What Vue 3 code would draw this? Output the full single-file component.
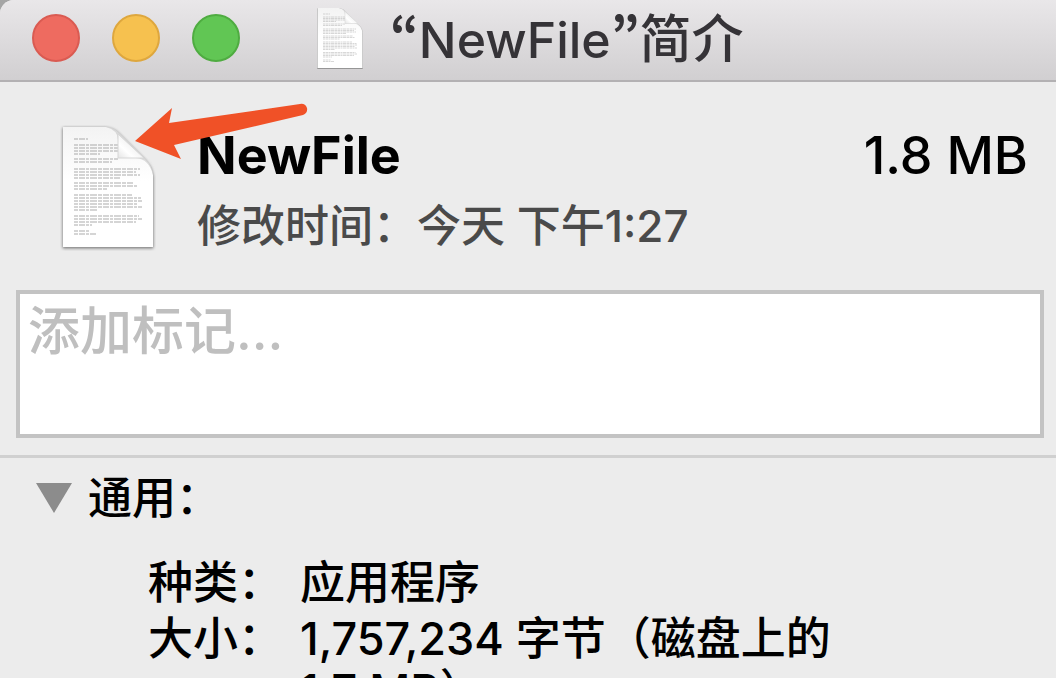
<script setup>
import { ref } from 'vue'

const tags = ref('')
const open = ref(true)
const details = [
  { label: '种类：', value: '应用程序' },
  { label: '大小：', value: '1,757,234 字节（磁盘上的 1.7 MB）' },
]
const lights = [
  { name: 'close', label: '关闭' },
  { name: 'minimize', label: '最小化' },
  { name: 'zoom', label: '缩放' },
]

// Each row: top offset and the width of the simulated text line
const rows = [
  [12, 14], [18, 47], [21, 44], [24, 46], [27, 26],
  [32, 44], [35, 38],
  [42, 66], [45, 62], [48, 66], [51, 46],
  [56, 60], [59, 64], [62, 33],
  [68, 58], [71, 67], [74, 68], [77, 63], [80, 68], [83, 23],
  [89, 65], [92, 68], [95, 62], [98, 18],
  [104, 15], [107, 22],
]
</script>

<template>
  <main class="window">
    <svg class="defs" aria-hidden="true">
      <defs>
        <linearGradient id="paper" x1="0" y1="0" x2="0" y2="1">
          <stop offset="0" stop-color="#f3f3f3" />
          <stop offset="0.45" stop-color="#ffffff" />
        </linearGradient>
        <linearGradient id="fold" x1="0" y1="1" x2="0.6" y2="0.4">
          <stop offset="0" stop-color="#e4e4e4" />
          <stop offset="0.5" stop-color="#ffffff" />
          <stop offset="1" stop-color="#f0f0f0" />
        </linearGradient>
        <filter id="soft" x="-10%" y="-10%" width="120%" height="120%">
          <feGaussianBlur stdDeviation="1.4" />
        </filter>
        <symbol id="document" viewBox="0 0 96 126">
          <path d="M3 2H46Q55 3 60 9L85 34Q92 41 93 50V122H3Z" fill="#777" stroke="#888" stroke-width="1" filter="url(#soft)" transform="translate(0 1)" />
          <path d="M3 2H46Q55 3 60 9L85 34Q92 41 93 50V122H3Z" fill="url(#paper)" />
          <g stroke="#9a9a9a" stroke-width="1.4" stroke-dasharray="4 1 6 1 3 1 7 1" opacity="0.55">
            <line v-for="row in rows" :key="row[0]" x1="14" :x2="14 + row[1]" :y1="row[0] + 2" :y2="row[0] + 2" />
          </g>
          <path d="M46 2Q58 5 58 15V33H76Q89 34 93 50Q92 41 85 34L60 9Q55 3 46 2Z" fill="#bbb" opacity="0.5" />
          <path d="M58 9V33H84Z" fill="url(#fold)" stroke="#d6d6d6" stroke-width="1" />
        </symbol>
      </defs>
    </svg>

    <header class="titlebar">
      <div class="lights">
        <button v-for="light in lights" :key="light.name" type="button" class="light" :class="light.name" :aria-label="light.label"></button>
      </div>
      <svg class="small-doc" aria-hidden="true"><use href="#document" /></svg>
      <h1><span class="quote">“</span><span class="file">NewFile</span><span class="quote">”</span>简介</h1>
    </header>

    <section class="summary">
      <svg class="large-doc" aria-hidden="true"><use href="#document" /></svg>
      <div class="info">
        <div class="name-row">
          <h2>NewFile</h2>
          <span class="size">1.8 MB</span>
        </div>
        <p>修改时间：今天 下午1:27</p>
      </div>
      <svg class="arrow" viewBox="0 0 174 58" aria-hidden="true">
        <path d="M0 40L37 7L34 22L165 3Q170 2 172 7Q173 12 168 14L39 44L46 58Z" fill="#f05127" />
      </svg>
    </section>

    <textarea v-model="tags" class="tags" placeholder="添加标记…" aria-label="添加标记"></textarea>

    <section class="general">
      <button type="button" class="disclosure" :aria-expanded="open" @click="open = !open">
        <svg viewBox="0 0 36 30" :class="{ closed: !open }" aria-hidden="true"><path d="M0 0H36L18 30Z" fill="#8c8c8c" /></svg>
        <span>通用：</span>
      </button>
      <dl v-if="open">
        <template v-for="item in details" :key="item.label">
          <dt>{{ item.label }}</dt>
          <dd>{{ item.value }}</dd>
        </template>
      </dl>
    </section>
  </main>
</template>

<style>
html, body { background: #a5a5a5; }
</style>

<style scoped>
* { box-sizing: border-box; margin: 0; padding: 0; }

.window {
  height: 100vh;
  overflow: hidden;
  border-top-left-radius: 14px;
  background: #ececec;
  color: #000;
  font-family: Inter, "Noto Sans CJK SC", sans-serif;
  font-size: 44px;
  font-weight: 500;
  line-height: 56px;
}

.defs { position: absolute; width: 0; height: 0; }

.titlebar {
  display: flex;
  align-items: center;
  height: 82px;
  padding: 0 32px 4px;
  border-bottom: 2px solid #b3b1b3;
  background: linear-gradient(#e9e7e9, #d1cfd1);
}

.lights { display: flex; gap: 32px; }

.light {
  width: 48px;
  height: 48px;
  border: 2px solid;
  border-radius: 50%;
}

.close { background: #ee6b60; border-color: #da5b52; }
.minimize { background: #f6c14f; border-color: #dea73e; }
.zoom { background: #61c654; border-color: #4fac41; }

.small-doc { width: 48px; height: 63px; margin-left: 76px; }

h1 {
  margin-left: 26px;
  color: #353337;
  font-size: 52px;
  font-weight: 500;
  line-height: 60px;
  white-space: nowrap;
}

.file { font-size: 50px; }

.quote {
  font-family: "Noto Sans CJK SC", sans-serif;
  font-size: 50px;
  font-weight: 700;
  font-feature-settings: "pwid";
}

.summary {
  position: relative;
  display: flex;
  gap: 41px;
  padding: 43px 28px 36px 60px;
}

.large-doc { flex: none; width: 96px; height: 126px; }

.info { flex: 1; padding-top: 1px; }

.name-row {
  display: flex;
  justify-content: space-between;
  margin-bottom: 12px;
  font-size: 52px;
  line-height: 60px;
}

h2 { font-size: 52px; font-weight: 700; }

.info p { color: #4a4a4a; }

.arrow {
  position: absolute;
  top: 19px;
  left: 135px;
  width: 174px;
  height: 58px;
}

.tags {
  display: block;
  width: calc(100% - 28px);
  height: 148px;
  margin: 0 12px 17px 16px;
  padding: 10px 8px;
  border: 4px solid #c3c3c3;
  border-radius: 0;
  outline: none;
  background: #fff;
  resize: none;
  font-family: inherit;
  font-size: 52px;
  font-weight: 500;
  line-height: 56px;
}

.tags::placeholder { color: #bfbfbf; opacity: 1; }

.general { padding: 12px 36px 0; border-top: 3px solid #d0d0d0; }

.disclosure {
  display: flex;
  align-items: center;
  gap: 16px;
  border: 0;
  background: none;
  color: inherit;
  font: inherit;
}

.disclosure svg { width: 36px; height: 30px; }
.disclosure .closed { transform: rotate(-90deg); }

dl {
  display: grid;
  grid-template-columns: max-content 1fr;
  gap: 4px 17px;
  margin-top: 31px;
  padding: 0 150px 0 112px;
  font-size: 45px;
  line-height: 52px;
}

dt { text-align: right; }
</style>
